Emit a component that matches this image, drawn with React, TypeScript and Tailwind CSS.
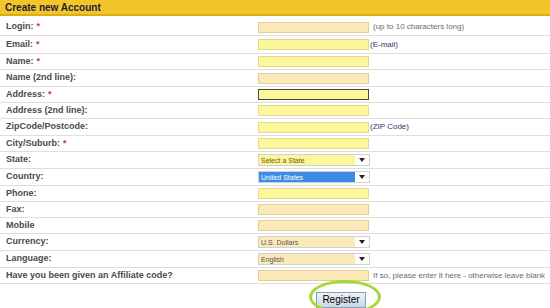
import React from "react";

type Field = {
  label: string;
  required?: boolean;
  kind: "text" | "select";
  tone?: "peach" | "yellow" | "focus" | "blue";
  value?: string;
  hint?: string;
  hintTone?: "gray" | "navy";
  h: string;
};

const fields: Field[] = [
  { label: "Login:", required: true, kind: "text", tone: "peach", hint: "(up to 10 characters long)", hintTone: "gray", h: "h-[17px]" },
  { label: "Email:", required: true, kind: "text", tone: "yellow", hint: "(E-mail)", hintTone: "navy", h: "h-[18px]" },
  { label: "Name:", required: true, kind: "text", tone: "yellow", h: "h-[16px]" },
  { label: "Name (2nd line):", kind: "text", tone: "peach", h: "h-[17px]" },
  { label: "Address:", required: true, kind: "text", tone: "focus", h: "h-[16px]" },
  { label: "Address (2nd line):", kind: "text", tone: "yellow", h: "h-[16px]" },
  { label: "ZipCode/Postcode:", kind: "text", tone: "yellow", hint: "(ZIP Code)", hintTone: "navy", h: "h-[17px]" },
  { label: "City/Suburb:", required: true, kind: "text", tone: "yellow", h: "h-[16px]" },
  { label: "State:", kind: "select", tone: "yellow", value: "Select a State", h: "h-[17px]" },
  { label: "Country:", kind: "select", tone: "blue", value: "United States", h: "h-[17px]" },
  { label: "Phone:", kind: "text", tone: "yellow", h: "h-[16px]" },
  { label: "Fax:", kind: "text", tone: "peach", h: "h-[16px]" },
  { label: "Mobile", kind: "text", tone: "peach", h: "h-[16px]" },
  { label: "Currency:", kind: "select", tone: "peach", value: "U.S. Dollars", h: "h-[17px]" },
  { label: "Language:", kind: "select", tone: "peach", value: "English", h: "h-[17px]" },
  { label: "Have you been given an Affiliate code?", kind: "text", tone: "peach", hint: "If so, please enter it here - otherwise leave blank", hintTone: "gray", h: "h-[16px]" },
];

const inputTone = {
  peach: "bg-[#fbe9b7] border-[#e3cf95]",
  yellow: "bg-[#fdf79b] border-[#e6d78a]",
  focus: "bg-[#fdf79b] border-[#4a4a3a]",
  blue: "",
};

const selectTone = {
  peach: "bg-[#fbe9b7] text-[#555]",
  yellow: "bg-[#fdf79b] text-[#6b5a1a]",
  focus: "bg-[#fdf79b]",
  blue: "bg-[#3d8ce4] text-white",
};

function FieldControl({ f }: { f: Field }) {
  if (f.kind === "select") {
    return (
      <div className="flex h-[12px] w-[112px] items-center border border-[#d0d0d0] bg-white">
        <div className={`flex h-full w-[96px] items-center px-[2px] text-[7px] leading-none ${selectTone[f.tone ?? "peach"]}`}>
          {f.value}
        </div>
        <div className="flex flex-1 items-center justify-center">
          <svg width="6" height="4" viewBox="0 0 6 4">
            <path d="M0 0h6L3 4z" fill="#222" />
          </svg>
        </div>
      </div>
    );
  }
  return <div className={`h-[11px] w-[111px] border ${inputTone[f.tone ?? "peach"]}`} />;
}

export default function App() {
  return (
    <div className="h-[308px] w-[550px] overflow-hidden bg-white font-['Liberation_Sans',Arial,sans-serif]">
      <div className="flex h-[16px] items-center border-b-2 border-[#dcae12] bg-[#f2c62a] pl-[5px] text-[10px] font-bold text-[#1c1c3c]">
        Create new Account
      </div>
      <div className="pt-[3px]">
        {fields.map((f) => (
          <div key={f.label} className={`flex items-center border-b border-[#dedede] ${f.h}`}>
            <div className="w-[258px] pl-[6px] text-[9px] font-bold text-[#4a4a4a]">
              {f.label}
              {f.required && <span className="ml-[3px] text-[#c03a5a]">*</span>}
            </div>
            <FieldControl f={f} />
            {f.hint && (
              <div
                className={`text-[8px] ${f.hintTone === "navy" ? "ml-[1px] text-[#34346a]" : "ml-[4px] text-[#6a6a6a]"}`}
              >
                {f.hint}
              </div>
            )}
          </div>
        ))}
      </div>
      <div className="flex pl-[316px] pt-[2px]">
        <div className="relative">
          <button className="h-[16px] w-[50px] border border-[#8aa0b4] bg-gradient-to-b from-[#eef3f8] to-[#c9d7e4] text-[10px] leading-none text-black">
            Register
          </button>
          <div className="pointer-events-none absolute -bottom-[4px] -left-[7px] -right-[15px] -top-[6px] rounded-[50%] border-[3px] border-[#a8d838]" />
        </div>
      </div>
    </div>
  );
}
